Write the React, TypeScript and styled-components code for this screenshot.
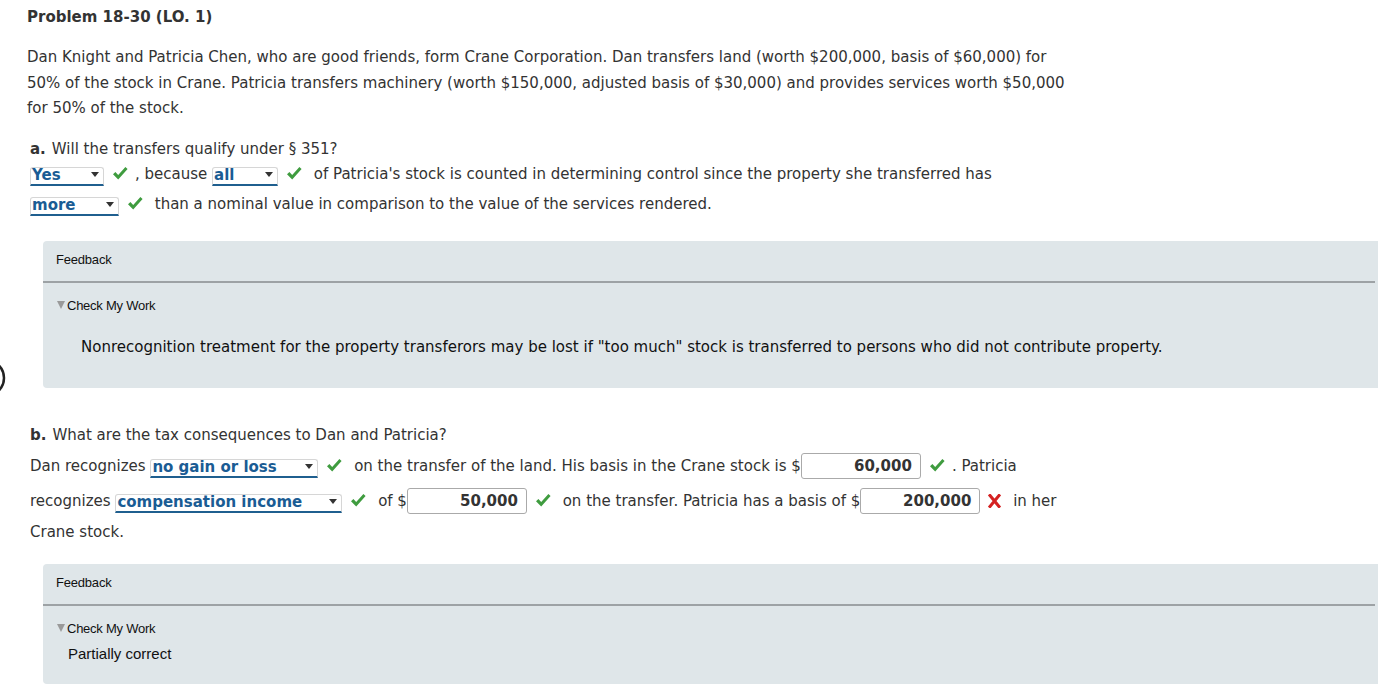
import React from 'react';
import styled, { createGlobalStyle } from 'styled-components';

const GlobalStyle = createGlobalStyle`
	html, body {
		margin: 0;
		padding: 0;
		background: #ffffff;
		overflow: hidden;
	}
	body {
		font-family: 'DejaVu Sans', Verdana, sans-serif;
		color: #333333;
	}
`;

const Page = styled.div`
	position: relative;
	width: 1378px;
	height: 695px;
	padding: 8px 0 0 27px;
	box-sizing: border-box;
	font-size: 15px;
`;

const Title = styled.div`
	font-weight: bold;
	font-size: 15px;
	line-height: 18px;
	color: #333;
`;

const Intro = styled.p`
	margin: 19px 0 0;
	line-height: 25.5px;
	width: 1050px;
`;

const Part = styled.div<{ $top: number }>`
	margin-top: ${(p) => p.$top}px;
	padding-left: 3px;
`;

const Question = styled.div`
	line-height: 20px;
`;

const Letter = styled.span`
	font-weight: bold;
	margin-right: 6px;
`;

const Line = styled.div<{ $h: number }>`
	line-height: ${(p) => p.$h}px;
	white-space: nowrap;
`;

const SelectBox = styled.span<{ $w: number }>`
	display: inline-flex;
	align-items: center;
	justify-content: space-between;
	box-sizing: border-box;
	width: ${(p) => p.$w}px;
	height: 19px;
	padding: 0 4px 2px 1px;
	vertical-align: -1px;
	background: #fff;
	border: 1px solid #d6d6d6;
	border-bottom: 2px solid #1f5f8f;
	border-radius: 3px 3px 0 0;
	color: #1a5c94;
	font-weight: bold;
	line-height: 16px;
`;

const Arrow = styled.span`
	width: 0;
	height: 0;
	border-left: 4px solid transparent;
	border-right: 4px solid transparent;
	border-top: 5px solid #333;
`;

const MarkIcon = styled.svg`
	display: inline-block;
	margin: 0 7px 0 8px;
	vertical-align: -2px;
`;

const Amount = styled.span`
	display: inline-block;
	box-sizing: border-box;
	width: 120px;
	height: 26px;
	padding: 0 8px;
	vertical-align: middle;
	border: 1px solid #aaaaaa;
	border-radius: 3px;
	background: #fff;
	text-align: right;
	font-weight: bold;
	line-height: 24px;
	color: #333;
`;

const Feedback = styled.div<{ $h: number }>`
	margin: 0 -10px 0 16px;
	height: ${(p) => p.$h}px;
	background: #dfe6e9;
	border-radius: 4px 0 0 4px;
	font-family: 'Liberation Sans', Arial, sans-serif;
	color: #111;
`;

const FeedbackHead = styled.div`
	padding: 10px 13px 0;
	height: 30px;
	font-size: 13px;
	letter-spacing: -0.2px;
	line-height: 17px;
	border-bottom: 2px solid #9da2a5;
	margin-right: 13px;
`;

const Toggle = styled.div`
	margin: 14px 0 0 14px;
	font-size: 13px;
	letter-spacing: -0.25px;
	line-height: 17px;
	display: flex;
	align-items: center;
	gap: 2px;
`;

const Tri = styled.span`
	width: 0;
	height: 0;
	border-left: 4px solid transparent;
	border-right: 4px solid transparent;
	border-top: 8px solid #9a9a9a;
`;

const Explain = styled.div`
	margin: 24px 0 0 38px;
	font-family: 'DejaVu Sans', Verdana, sans-serif;
	font-size: 15px;
	line-height: 18px;
	color: #111;
`;

const Partial = styled.div`
	margin: 7px 0 0 25px;
	font-size: 15px;
	line-height: 19px;
`;

const Spacer = styled.div<{ $h: number }>`
	height: ${(p) => p.$h}px;
`;

const Edge = styled.svg`
	position: absolute;
	left: 0;
	top: 358px;
`;

const Check = () => (
	<MarkIcon width="16" height="15" viewBox="0 0 16 15">
		<path d="M1 8.2 L3.4 6 L6.2 9 L13.4 1 L15.6 3 L6.2 13.6 Z" fill="#3f9c3f" />
	</MarkIcon>
);

const Cross = () => (
	<MarkIcon width="13" height="14" viewBox="0 0 13 14">
		<path d="M2 1.5 L11 12.5 M11 1.5 L2 12.5" stroke="#d42222" strokeWidth="3" strokeLinecap="square" />
	</MarkIcon>
);

const Select = ({ w, value }: { w: number; value: string }) => (
	<SelectBox $w={w}>
		{value}
		<Arrow />
	</SelectBox>
);

export default function App() {
	return (
		<>
			<GlobalStyle />
			<Page>
				<Edge width="8" height="40" viewBox="0 0 8 40">
					<circle cx="-14" cy="20" r="18" fill="none" stroke="#222" strokeWidth="2.5" />
				</Edge>
				<Title>Problem 18-30 (LO. 1)</Title>
				<Intro>
					Dan Knight and Patricia Chen, who are good friends, form Crane Corporation. Dan transfers land (worth $200,000, basis of $60,000) for 50% of the stock in Crane. Patricia transfers machinery (worth $150,000, adjusted basis of $30,000) and provides services worth $50,000 for 50% of the stock.
				</Intro>
				<Part $top={17}>
					<Question>
						<Letter>a.</Letter>Will the transfers qualify under § 351?
					</Question>
					<Line $h={30}>
						<Select w={74} value="Yes" />
						<Check />, because <Select w={66} value="all" />
						<Check /> of Patricia's stock is counted in determining control since the property she transferred has
					</Line>
					<Line $h={30}>
						<Select w={89} value="more" />
						<Check /> than a nominal value in comparison to the value of the services rendered.
					</Line>
				</Part>
				<Spacer $h={22} />
				<Feedback $h={147}>
					<FeedbackHead>Feedback</FeedbackHead>
					<Toggle>
						<Tri />
						Check My Work
					</Toggle>
					<Explain>
						Nonrecognition treatment for the property transferors may be lost if "too much" stock is transferred to persons who did not contribute property.
					</Explain>
				</Feedback>
				<Part $top={37}>
					<Question>
						<Letter>b.</Letter>What are the tax consequences to Dan and Patricia?
					</Question>
					<Line $h={42}>
						Dan recognizes <Select w={168} value="no gain or loss" />
						<Check /> on the transfer of the land. His basis in the Crane stock is $<Amount>60,000</Amount>
						<Check />. Patricia
					</Line>
					<Line $h={28}>
						recognizes <Select w={227} value="compensation income" />
						<Check /> of $<Amount>50,000</Amount>
						<Check /> on the transfer. Patricia has a basis of $<Amount>200,000</Amount>
						<Cross /> in her
					</Line>
					<Line $h={34}>Crane stock.</Line>
				</Part>
				<Spacer $h={15} />
				<Feedback $h={120}>
					<FeedbackHead>Feedback</FeedbackHead>
					<Toggle>
						<Tri />
						Check My Work
					</Toggle>
					<Partial>Partially correct</Partial>
				</Feedback>
			</Page>
		</>
	);
}
